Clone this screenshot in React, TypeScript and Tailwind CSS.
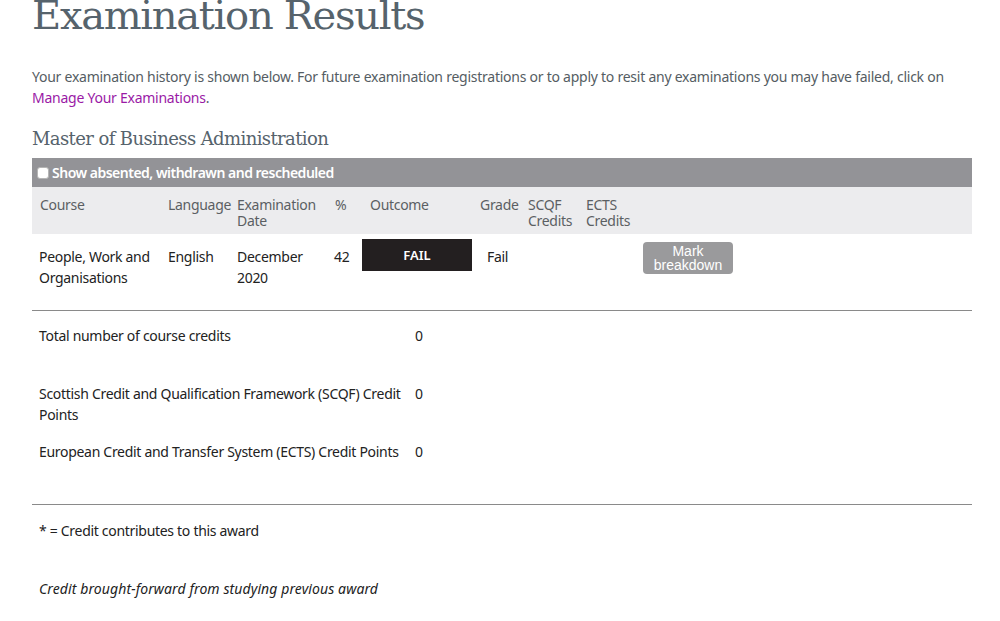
import React from "react";

const sans = "font-['Noto_Sans','Open_Sans',sans-serif]";

export default function App() {
  return (
    <div className={`w-[1000px] min-h-[621px] bg-white pl-[32px] pr-[28px] ${sans} text-[14px] tracking-[-0.3px] overflow-hidden`}>
      <h1 className="-mt-[5px] h-[40px] text-[40px] leading-[40px] tracking-[-1.3px] text-[#56636c] font-['DejaVu_Serif',serif] font-normal whitespace-nowrap">
        Examination Results
      </h1>

      <p className="mt-[31px] leading-[21px] text-[#555d63] tracking-[-0.25px]">
        Your examination history is shown below. For future examination registrations or to apply to resit any examinations you may have failed, click on{" "}
        <a href="#" className="text-[#9a1aa6]">Manage Your Examinations</a>.
      </p>

      <h2 className="mt-[19px] h-[24px] text-[18px] leading-[24px] tracking-[-0.6px] text-[#56636c] font-['DejaVu_Serif',serif] font-normal">
        Master of Business Administration
      </h2>

      <div className="mt-[7px]">
        {/* filter bar */}
        <label className="flex h-[29px] items-center bg-[#939397] pl-[5px] text-white font-semibold tracking-[-0.5px]">
          <span className="mr-[3px] h-[12px] w-[12px] rounded-[3px] border border-[#b5b5b5] bg-white" />
          Show absented, withdrawn and rescheduled
        </label>

        {/* column headings */}
        <div className="grid h-[47px] grid-cols-[129px_69px_98px_34px_111px_48px_58px_58px_1fr] bg-[#ececee] pt-[10px] text-[#5b5f63] leading-[16px]">
          <div className="pl-[8px]">Course</div>
          <div className="pl-[7px]">Language</div>
          <div className="pl-[7px]">Examination<br />Date</div>
          <div className="pl-[7px]">%</div>
          <div className="pl-[8px]">Outcome</div>
          <div className="pl-[7px]">Grade</div>
          <div className="pl-[7px]">SCQF<br />Credits</div>
          <div className="pl-[7px]">ECTS<br />Credits</div>
          <div />
        </div>

        {/* result row */}
        <div className="grid h-[77px] grid-cols-[129px_69px_98px_34px_111px_48px_58px_58px_1fr] border-b border-[#8a8a8a] text-[#222] leading-[21px]">
          <div className="pl-[7px] pt-[12px]">People, Work and Organisations</div>
          <div className="pl-[7px] pt-[12px]">English</div>
          <div className="pl-[7px] pt-[12px]">December<br />2020</div>
          <div className="pl-[6px] pt-[12px]">42</div>
          <div className="pt-[5px]">
            <div className="flex h-[32px] w-[110px] items-center justify-center bg-[#231f20] text-[13px] font-semibold text-white tracking-normal">
              FAIL
            </div>
          </div>
          <div className="pl-[14px] pt-[12px]">Fail</div>
          <div />
          <div />
          <div className="pl-[6px] pt-[8px]">
            <button className="flex h-[32px] w-[90px] flex-col items-center justify-center rounded-[4px] bg-[#9a9a9c] font-['Liberation_Sans',Arial,sans-serif] text-[14px] leading-[14px] tracking-normal text-white">
              <span>Mark</span>
              <span>breakdown</span>
            </button>
          </div>
        </div>
      </div>

      {/* credit totals */}
      <div className="grid grid-cols-[376px_1fr] text-[#222] leading-[21px] border-b border-[#8a8a8a] pb-[42px]">
        <div className="mt-[14px] pl-[7px]">Total number of course credits</div>
        <div className="mt-[14px] pl-[7px]">0</div>
        <div className="mt-[37px] pl-[7px]">Scottish Credit and Qualification Framework (SCQF) Credit Points</div>
        <div className="mt-[37px] pl-[7px]">0</div>
        <div className="mt-[16px] pl-[7px]">European Credit and Transfer System (ECTS) Credit Points</div>
        <div className="mt-[16px] pl-[7px]">0</div>
      </div>

      <p className="mt-[15px] pl-[7px] leading-[21px] text-[#222]">* = Credit contributes to this award</p>
      <p className="mt-[37px] pl-[7px] leading-[21px] text-[#222] italic tracking-[0.1px]">Credit brought-forward from studying previous award</p>
    </div>
  );
}
